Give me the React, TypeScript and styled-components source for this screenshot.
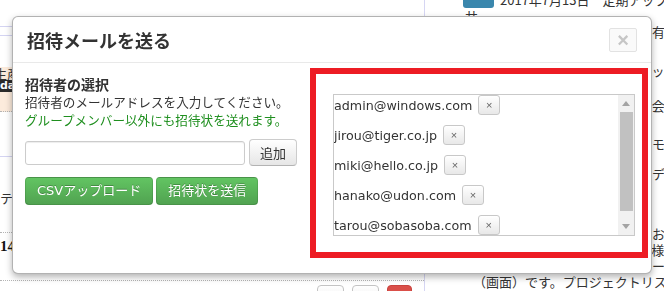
import React from 'react';
import styled, { createGlobalStyle } from 'styled-components';

const GlobalStyle = createGlobalStyle`
  html, body {
    margin: 0;
    padding: 0;
    background: #fff;
    overflow: hidden;
  }
  body {
    font-family: "DejaVu Sans", "Noto Sans CJK JP", sans-serif;
    color: #333;
  }
`;

// ---- background page (behind the dialog) ----

const Page = styled.div`
  display: flex;
  width: 664px;
  height: 291px;
  overflow: hidden;
  font-size: 13px;
  font-family: "Noto Sans CJK JP", sans-serif;
`;

const SideCol = styled.div`
  flex: 0 0 424px;
  border-right: 1px solid #d6d6f3;
  display: flex;
  flex-direction: column;
  overflow: hidden;
`;

const Band = styled.div<{ $h: number; $line?: 'solid' | 'dotted'; $pad?: number }>`
  flex: none;
  height: ${p => p.$h}px;
  box-sizing: border-box;
  padding-top: ${p => p.$pad || 0}px;
  line-height: 16px;
  white-space: nowrap;
  border-bottom: ${p =>
    p.$line === 'dotted' ? '1px dotted #b5b5b5' : p.$line === 'solid' ? '1px solid #d4d4f2' : 'none'};
`;

const PeachBlock = styled.div`
  flex: none;
  height: 45px;
  box-sizing: border-box;
  background: #fcebdc;
  border-bottom: 1px dotted #b5b5b5;
  line-height: 13px;
  white-space: nowrap;
`;

const CutText = styled.div`
  margin-left: -6px;
`;

const DarkLabel = styled.div`
  background: #2b2b2b;
  color: #fff;
  font-family: "DejaVu Sans", sans-serif;
  font-weight: bold;
  font-size: 11px;
  line-height: 12px;
  height: 12px;
  width: 120px;
`;

const SerifNum = styled.span`
  font-family: "Liberation Serif", serif;
  font-weight: bold;
  font-size: 15px;
  color: #111;
`;

const ToolRow = styled.div`
  display: flex;
  align-items: flex-start;
  line-height: 16px;
  padding-top: 4px;
`;

const ToolNum = styled.span`
  flex: 1;
  padding-top: 4px;
  font-family: "Liberation Serif", serif;
  color: #111;
`;

const ToolBtn = styled.span<{ $danger?: boolean }>`
  width: ${p => (p.$danger ? 25 : 27)}px;
  height: 20px;
  margin-left: 8px;
  box-sizing: border-box;
  border-radius: 4px;
  border: 1px solid ${p => (p.$danger ? '#c9443f' : '#c4c4c4')};
  background: ${p => (p.$danger ? '#da4f49' : 'linear-gradient(#fff, #ececec)')};
`;

const ToolGroup = styled.div`
  display: flex;
  margin-right: 12px;
`;

const NewsCol = styled.div`
  flex: 1;
  padding-left: 40px;
  display: flex;
  flex-direction: column;
  line-height: 16px;
  white-space: nowrap;
  color: #333;
`;

const NewsHead = styled.div`
  margin-top: -8px;
`;

const InfoBadge = styled.span`
  display: inline-block;
  margin-left: -2px;
  margin-right: 6px;
  width: 31px;
  height: 16px;
  vertical-align: top;
  border-radius: 3px;
  background: #3a87ad;
`;

const NewsLine = styled.div<{ $gap?: number; $indent?: number }>`
  margin-top: ${p => p.$gap || 0}px;
  padding-left: ${p => p.$indent ?? 5}px;
`;

// ---- dialog ----

const Modal = styled.div`
  position: fixed;
  top: 16px;
  left: 12px;
  width: 640px;
  height: 258px;
  box-sizing: border-box;
  background: #fff;
  border: 1px solid rgba(0, 0, 0, 0.3);
  border-radius: 6px;
  box-shadow: 0 3px 7px rgba(0, 0, 0, 0.3);
  display: flex;
  flex-direction: column;
`;

const ModalHeader = styled.div`
  height: 46px;
  box-sizing: border-box;
  border-bottom: 1px solid #e9e9e9;
  padding: 0 14px;
  display: flex;
  align-items: center;
  justify-content: space-between;
`;

const Title = styled.h3`
  margin: 0;
  font-family: "Noto Sans CJK JP", sans-serif;
  font-size: 18px;
  font-weight: bold;
  color: #333;
  line-height: 24px;
`;

const CloseBtn = styled.button`
  width: 28px;
  height: 24px;
  margin-top: 1px;
  padding: 0;
  box-sizing: border-box;
  border: 1px solid #e2e2e2;
  border-radius: 2px;
  background: #fafafa;
  color: #c6c6c6;
  font-family: "Liberation Sans", sans-serif;
  font-size: 20px;
  font-weight: bold;
  line-height: 20px;
`;

const ModalBody = styled.div`
  flex: 1;
  display: flex;
  align-items: flex-start;
  padding: 5px 3px 0 12px;
`;

const FormCol = styled.div`
  width: 272px;
  padding-top: 7px;
`;

const SectionTitle = styled.div`
  font-family: "Noto Sans CJK JP", sans-serif;
  font-size: 14px;
  font-weight: bold;
  line-height: 18px;
  color: #333;
`;

const Note = styled.div<{ $green?: boolean }>`
  font-family: "Noto Sans CJK JP", sans-serif;
  font-size: 12.6px;
  line-height: 18px;
  white-space: nowrap;
  color: ${p => (p.$green ? '#1f8f1f' : '#333')};
`;

const InputRow = styled.div`
  display: flex;
  align-items: center;
  gap: 4px;
  margin-top: 10px;
  height: 27px;
`;

const MailInput = styled.input`
  width: 220px;
  height: 24px;
  box-sizing: border-box;
  border: 1px solid #cccccc;
  border-radius: 3px;
  box-shadow: inset 0 1px 1px rgba(0, 0, 0, 0.075);
  padding: 2px 6px;
  outline: none;
`;

const PlainBtn = styled.button`
  width: 48px;
  height: 27px;
  box-sizing: border-box;
  padding: 0;
  border: 1px solid #cccccc;
  border-bottom-color: #b3b3b3;
  border-radius: 4px;
  background: linear-gradient(#ffffff, #e6e6e6);
  color: #333;
  font-family: "Noto Sans CJK JP", sans-serif;
  font-size: 13px;
  line-height: 20px;
`;

const ActionRow = styled.div`
  display: flex;
  gap: 3px;
  margin-top: 11px;
`;

const SuccessBtn = styled.button`
  height: 28px;
  box-sizing: border-box;
  padding: 0 11px;
  border: 1px solid rgba(0, 0, 0, 0.1);
  border-bottom-color: rgba(0, 0, 0, 0.25);
  border-radius: 4px;
  background: linear-gradient(#62c462, #51a351);
  color: #fff;
  text-shadow: 0 -1px 0 rgba(0, 0, 0, 0.25);
  font-family: "DejaVu Sans", "Noto Sans CJK JP", sans-serif;
  font-size: 13px;
  line-height: 20px;
  white-space: nowrap;
`;

const Highlight = styled.div`
  margin-left: 13px;
  width: 338px;
  height: 190px;
  box-sizing: border-box;
  border: 6px solid #ed1c24;
  padding: 20px 0 0 17px;
`;

const ListBox = styled.div`
  width: 302px;
  height: 142px;
  box-sizing: border-box;
  border: 1px solid #c9c9c9;
  display: flex;
`;

const ListItems = styled.div`
  flex: 1;
  display: flex;
  flex-direction: column;
  gap: 10px;
  overflow: hidden;
`;

const ListRow = styled.div`
  display: flex;
  align-items: center;
  gap: 6px;
  height: 20px;
  font-family: "DejaVu Sans", sans-serif;
  font-size: 12.7px;
  color: #333;
  white-space: nowrap;
`;

const RemoveBtn = styled.button`
  width: 22px;
  height: 20px;
  padding: 0;
  box-sizing: border-box;
  border: 1px solid #c8c8c8;
  border-radius: 3px;
  background: linear-gradient(#ffffff, #e8e8e8);
  color: #666;
  font-family: "Liberation Sans", sans-serif;
  font-size: 11px;
  line-height: 16px;
`;

const ScrollTrack = styled.div`
  width: 16px;
  flex: none;
  background: #f1f1f1;
  display: flex;
  flex-direction: column;
`;

const ScrollArrow = styled.div`
  height: 17px;
  flex: none;
  display: flex;
  align-items: center;
  justify-content: center;
`;

const ScrollSpace = styled.div`
  flex: 1;
`;

const ScrollThumb = styled.div`
  height: 99px;
  margin: 0 1px 0 2px;
  background: #c1c1c1;
`;

const emails = [
  'admin@windows.com',
  'jirou@tiger.co.jp',
  'miki@hello.co.jp',
  'hanako@udon.com',
  'tarou@sobasoba.com',
];

const Arrow: React.FC<{ down?: boolean }> = ({ down }) => (
  <svg width="8" height="5" viewBox="0 0 8 5">
    <path d={down ? 'M0 0 L8 0 L4 5 Z' : 'M0 5 L8 5 L4 0 Z'} fill="#a3a3a3" />
  </svg>
);

export default function App() {
  return (
    <>
      <GlobalStyle />
      <Page>
        <SideCol>
          <Band $h={27} $line="solid" />
          <Band $h={9} $line="solid" />
          <Band $h={31} />
          <PeachBlock>
            <CutText>生産</CutText>
            <DarkLabel>data</DarkLabel>
          </PeachBlock>
          <Band $h={45} $line="solid" />
          <Band $h={76} $line="dotted" $pad={33}>
            テスト案件の進捗
          </Band>
          <Band $h={48} $line="dotted" $pad={5}>
            <SerifNum>14</SerifNum>
          </Band>
          <ToolRow>
            <ToolNum>1</ToolNum>
            <ToolGroup>
              <ToolBtn />
              <ToolBtn />
              <ToolBtn $danger />
            </ToolGroup>
          </ToolRow>
        </SideCol>

        <NewsCol>
          <NewsHead>
            <InfoBadge />
            2017年7月13日　定期アップデートのお知らせ
            <br />
            サ
          </NewsHead>
          <NewsLine>【導入事例】北海道森林組合国有林管理</NewsLine>
          <NewsLine $gap={23}>【新機能】スマホ版アプリのアップデート</NewsLine>
          <NewsLine $gap={19}>【お知らせ】オンライン定例の会議機能</NewsLine>
          <NewsLine $gap={22}>【新機能】タスク管理と共有メモ帳</NewsLine>
          <NewsLine $gap={14}>【改善】カレンダー表示の連携データ</NewsLine>
          <NewsLine $gap={44}>本日は弊社のサービスをご利用おきいただき</NewsLine>
          <NewsLine>既にご利用いただいているお客様を対象に</NewsLine>
          <NewsLine>新機能の詳細は管理画面の各サービス</NewsLine>
          <NewsLine $indent={8}>（画面）です。プロジェクトリストなどご</NewsLine>
          <NewsLine $indent={8}>います。</NewsLine>
        </NewsCol>
      </Page>

      <Modal>
        <ModalHeader>
          <Title>招待メールを送る</Title>
          <CloseBtn>×</CloseBtn>
        </ModalHeader>
        <ModalBody>
          <FormCol>
            <SectionTitle>招待者の選択</SectionTitle>
            <Note>招待者のメールアドレスを入力してください。</Note>
            <Note $green>グループメンバー以外にも招待状を送れます。</Note>
            <InputRow>
              <MailInput type="text" />
              <PlainBtn>追加</PlainBtn>
            </InputRow>
            <ActionRow>
              <SuccessBtn>CSVアップロード</SuccessBtn>
              <SuccessBtn>招待状を送信</SuccessBtn>
            </ActionRow>
          </FormCol>

          <Highlight>
            <ListBox>
              <ListItems>
                {emails.map(mail => (
                  <ListRow key={mail}>
                    {mail}
                    <RemoveBtn>×</RemoveBtn>
                  </ListRow>
                ))}
              </ListItems>
              <ScrollTrack>
                <ScrollArrow>
                  <Arrow />
                </ScrollArrow>
                <ScrollThumb />
                <ScrollSpace />
                <ScrollArrow>
                  <Arrow down />
                </ScrollArrow>
              </ScrollTrack>
            </ListBox>
          </Highlight>
        </ModalBody>
      </Modal>
    </>
  );
}
